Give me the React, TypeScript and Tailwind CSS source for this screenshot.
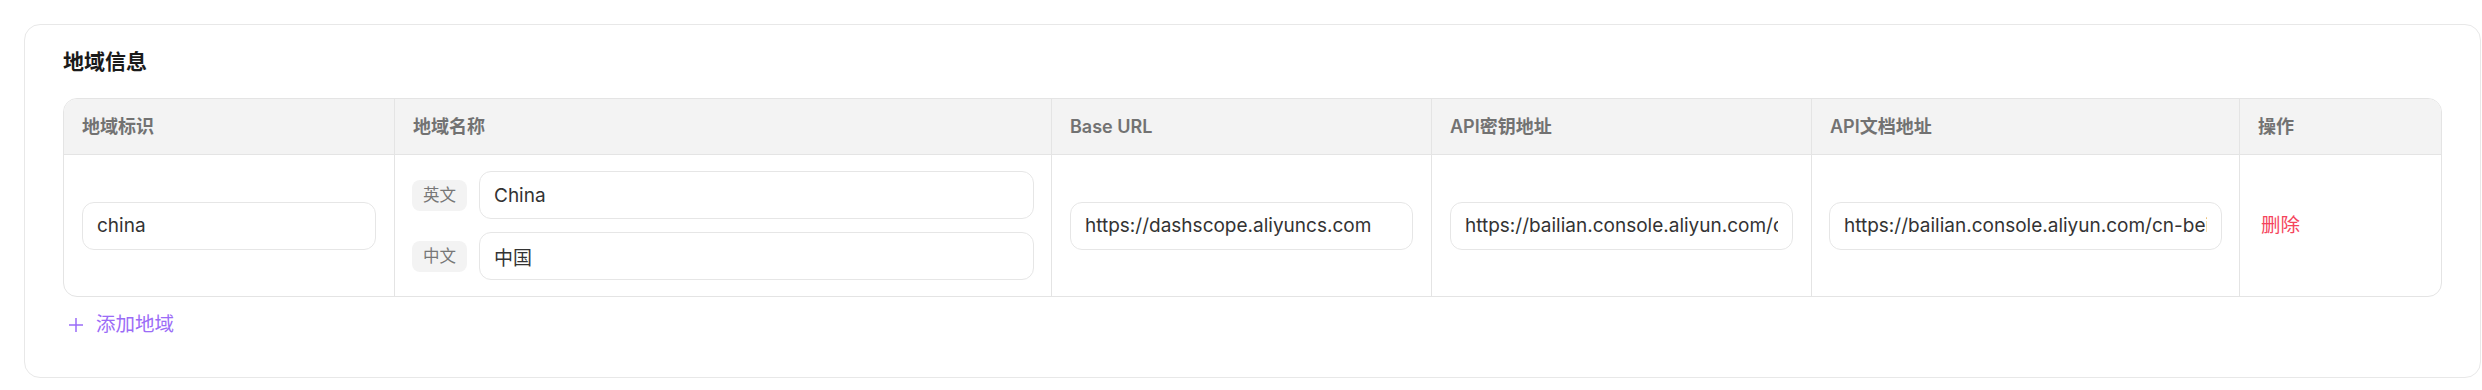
import { FC } from 'react'

const FONT = `font-['Inter','Noto_Sans_CJK_SC',sans-serif]`

interface IFieldProps {
  value: string
  className?: string
}

const Field: FC<IFieldProps> = ({ value, className = `` }) => (
  <input
    readOnly
    value={value}
    className={`h-[48px] rounded-[12px] border border-[#e6e6e6] bg-white px-[14px] text-[19px] text-[#333] outline-none ${FONT} ${className}`}
  />
)

const Tag: FC<{ label: string }> = ({ label }) => (
  <span className="flex h-[31px] w-[55px] shrink-0 items-center justify-center rounded-[8px] bg-[#f3f3f3] text-[16.5px] text-[#777]">
    {label}
  </span>
)

const headers = [
  { label: `地域标识`, w: `w-[331px]` },
  { label: `地域名称`, w: `w-[657px]` },
  { label: `Base URL`, w: `w-[380px]` },
  { label: `API密钥地址`, w: `w-[380px]` },
  { label: `API文档地址`, w: `w-[428px]` },
  { label: `操作`, w: `flex-1` },
]

export default function App() {
  return (
    <div className={`min-h-[390px] bg-white pl-[24px] pt-[24px] ${FONT}`}>
      <div className="w-[2457px] rounded-[16px] border border-[#e8e8e8] px-[38px] pt-[23px] pb-[38px]">
        <h2 className="text-[21px] leading-[28px] font-bold text-[#1a1a1a]">
          地域信息
        </h2>

        <div className="mt-[22px] overflow-hidden rounded-[14px] border border-[#e4e4e4]">
          <div className="flex h-[56px] border-b border-[#e4e4e4] bg-[#f3f3f3]">
            {headers.map((h, i) => (
              <div
                key={h.label}
                className={`flex items-center px-[18px] text-[18px] font-semibold text-[#727272] ${h.w} ${
                  i < headers.length - 1 ? `border-r border-[#e4e4e4]` : ``
                }`}
              >
                {h.label}
              </div>
            ))}
          </div>

          <div className="flex h-[141px]">
            <div className="flex w-[331px] items-center border-r border-[#e4e4e4] px-[18px]">
              <Field value="china" className="w-full" />
            </div>
            <div className="flex w-[657px] flex-col justify-center gap-[13px] border-r border-[#e4e4e4] px-[17px]">
              <div className="flex items-center gap-[12px]">
                <Tag label="英文" />
                <Field value="China" className="flex-1" />
              </div>
              <div className="flex items-center gap-[12px]">
                <Tag label="中文" />
                <Field value="中国" className="flex-1" />
              </div>
            </div>
            <div className="flex w-[380px] items-center border-r border-[#e4e4e4] px-[18px]">
              <Field value="https://dashscope.aliyuncs.com" className="w-full" />
            </div>
            <div className="flex w-[380px] items-center border-r border-[#e4e4e4] px-[18px]">
              <Field
                value="https://bailian.console.aliyun.com/cn-beijing/?tab=model#/api-key"
                className="w-full"
              />
            </div>
            <div className="flex w-[428px] items-center border-r border-[#e4e4e4] px-[17px]">
              <Field
                value="https://bailian.console.aliyun.com/cn-beijing/?tab=doc#/doc"
                className="w-full"
              />
            </div>
            <div className="flex flex-1 items-center px-[21px]">
              <button className="text-[19.5px] text-[#f5455c]">删除</button>
            </div>
          </div>
        </div>

        <button className="mt-[14px] flex h-[28px] items-center gap-[12px] pl-[5px] text-[19.5px] text-[#9b6cf7]">
          <svg
            width="16"
            height="16"
            viewBox="0 0 16 16"
            fill="none"
            stroke="currentColor"
            strokeWidth="1.5"
          >
            <path d="M8 1v14M1 8h14" />
          </svg>
          添加地域
        </button>
      </div>
    </div>
  )
}
